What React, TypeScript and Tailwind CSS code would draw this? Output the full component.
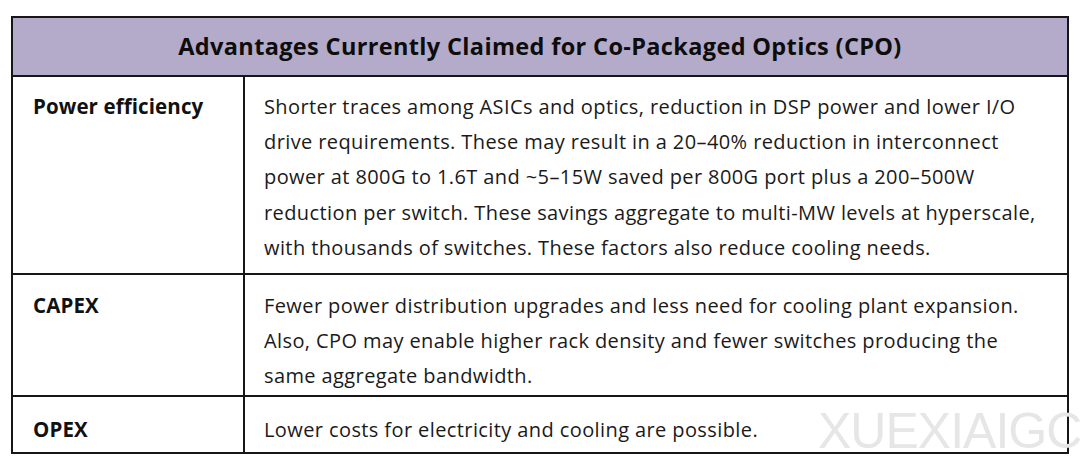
const rows = [
  {
    label: "Power efficiency",
    h: "h-[198px]",
    pt: "pt-[12px]",
    lines: [
      "Shorter traces among ASICs and optics, reduction in DSP power and lower I/O",
      "drive requirements. These may result in a 20\u201340% reduction in interconnect",
      "power at 800G to 1.6T and ~5\u201315W saved per 800G port plus a 200\u2013500W",
      "reduction per switch. These savings aggregate to multi-MW levels at hyperscale,",
      "with thousands of switches. These factors also reduce cooling needs.",
    ],
  },
  {
    label: "CAPEX",
    h: "h-[122px]",
    pt: "pt-[13px]",
    lines: [
      "Fewer power distribution upgrades and less need for cooling plant expansion.",
      "Also, CPO may enable higher rack density and fewer switches producing the",
      "same aggregate bandwidth.",
    ],
  },
  {
    label: "OPEX",
    h: "h-[55px]",
    pt: "pt-[15px]",
    lines: ["Lower costs for electricity and cooling are possible."],
  },
];

export default function App() {
  return (
    <div className="relative w-[1080px] h-[466px] bg-white overflow-hidden pl-[11px] pt-[16px] font-['Open_Sans',sans-serif] text-[#111]">
      <div className="w-[1058px] border-2 border-[#161616]">
        <div className="h-[59px] bg-[#b3abc9] border-b-2 border-[#161616] flex items-center justify-center">
          <h1 className="text-[23.5px] font-bold tracking-[0.35px] text-[#0d0d0d]">
            Advantages Currently Claimed for Co-Packaged Optics (CPO)
          </h1>
        </div>
        {rows.map((r, i) => (
          <div
            key={r.label}
            className={`grid grid-cols-[230px_1fr] ${r.h} ${i < rows.length - 1 ? "border-b-2 border-[#161616]" : ""}`}
          >
            <div className={`${r.pt} pl-[20px] text-[20.5px] font-bold tracking-[0.1px] leading-[35.2px]`}>{r.label}</div>
            <div className={`${r.pt} pl-[19px] border-l-2 border-[#161616] text-[20px] tracking-[0.4px] leading-[35.2px] text-[#1a1a1a]`}>
              {r.lines.map((l) => (
                <div key={l} className="whitespace-nowrap">{l}</div>
              ))}
            </div>
          </div>
        ))}
      </div>
      <div className="absolute left-[818px] top-[406px] text-[50px] font-light leading-none text-[#e6e6e6] font-['Liberation_Sans',sans-serif] tracking-[-1px] pointer-events-none">
        XUEXIAIGC
      </div>
    </div>
  );
}
